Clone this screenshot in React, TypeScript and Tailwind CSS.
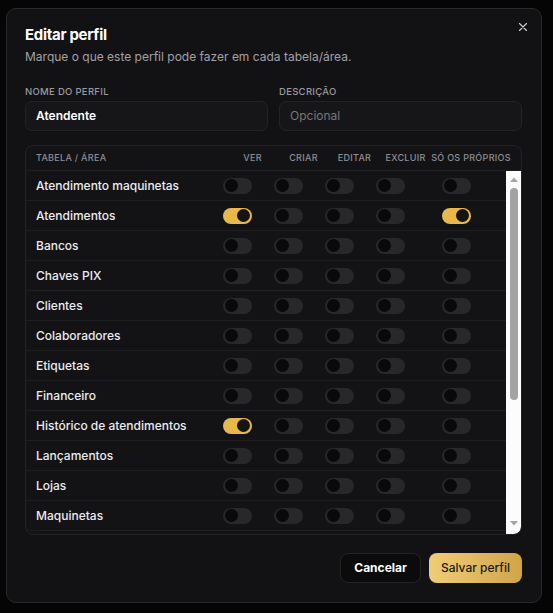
import { useState } from "react";

type Perm = "ver" | "criar" | "editar" | "excluir" | "proprios";

const COLS: { key: Perm; label: string }[] = [
  { key: "ver", label: "Ver" },
  { key: "criar", label: "Criar" },
  { key: "editar", label: "Editar" },
  { key: "excluir", label: "Excluir" },
  { key: "proprios", label: "Só os próprios" },
];

const TABELAS = [
  "Atendimento maquinetas",
  "Atendimentos",
  "Bancos",
  "Chaves PIX",
  "Clientes",
  "Colaboradores",
  "Etiquetas",
  "Financeiro",
  "Histórico de atendimentos",
  "Lançamentos",
  "Lojas",
  "Maquinetas",
];

const INICIAL: Record<string, Perm[]> = {
  Atendimentos: ["ver", "proprios"],
  "Histórico de atendimentos": ["ver"],
};

const grid = "grid grid-cols-[1fr_51px_51px_51px_51px_80px] items-center";

function Toggle({ on, onClick }: { on: boolean; onClick: () => void }) {
  return (
    <button
      onClick={onClick}
      className={`relative mx-auto flex h-[16px] w-[29px] items-center rounded-full px-[2px] ${
        on ? "justify-end bg-[#e8b84a]" : "justify-start bg-[#28282b]"
      }`}
    >
      <span className={`block h-[13px] w-[13px] rounded-full ${on ? "bg-[#141414]" : "bg-[#09090a]"}`} />
    </button>
  );
}

function Scrollbar() {
  return (
    <div className="flex w-[15px] flex-col items-center rounded-br-[7px] bg-[#fcfcfc] pb-[3px]">
      <svg width="10" height="14" viewBox="0 0 10 14" className="mt-[1px]">
        <path d="M1 10 5 5.5 9 10Z" fill="#a3a3a3" />
      </svg>
      <div className="mt-[2px] h-[212px] w-[8px] rounded-full bg-[#a3a3a3]" />
      <div className="flex-1" />
      <svg width="10" height="14" viewBox="0 0 10 14">
        <path d="M1 4 5 8.5 9 4Z" fill="#a3a3a3" />
      </svg>
    </div>
  );
}

export default function App() {
  const [perms, setPerms] = useState<Record<string, Perm[]>>(INICIAL);

  const toggle = (t: string, p: Perm) => {
    setPerms((prev) => {
      const cur = prev[t] ?? [];
      return { ...prev, [t]: cur.includes(p) ? cur.filter((x) => x !== p) : [...cur, p] };
    });
  };

  return (
    <div
      className="h-[613px] w-full bg-[#050505] pl-[6px] pt-[8px]"
      style={{ fontFamily: "Inter, 'Noto Sans', sans-serif" }}
    >
      <div className="relative flex w-[536px] flex-col rounded-[10px] border border-[#2a2a2c] bg-[#121214] pb-[19px] pl-[18px] pr-[19px] pt-[14px]">
        <button className="absolute right-[11px] top-[11px] text-[#cfcfcf]">
          <svg width="14" height="14" viewBox="0 0 24 24" fill="none" stroke="currentColor" strokeWidth="2" strokeLinecap="round">
            <path d="M18 6 6 18M6 6l12 12" />
          </svg>
        </button>

        <h2 className="text-[15px] font-bold leading-[24px] tracking-[-0.3px] text-white">Editar perfil</h2>
        <p className="text-[12px] leading-[20px] text-[#a1a1a6]">
          Marque o que este perfil pode fazer em cada tabela/área.
        </p>

        <div className="mt-[18px] grid grid-cols-2 gap-[11px]">
          <div className="flex flex-col gap-[2px]">
            <label className="text-[9.5px] font-medium uppercase leading-[14px] tracking-[0.3px] text-[#9a9a9e]">
              Nome do perfil
            </label>
            <div className="flex h-[30px] items-center rounded-[7px] border border-[#232326] bg-[#161618] px-[10px] text-[12px] font-semibold text-white">
              Atendente
            </div>
          </div>
          <div className="flex flex-col gap-[2px]">
            <label className="text-[9.5px] font-medium uppercase leading-[14px] tracking-[0.3px] text-[#9a9a9e]">
              Descrição
            </label>
            <div className="flex h-[30px] items-center rounded-[7px] border border-[#232326] bg-[#161618] px-[10px] text-[12px] text-[#77777c]">
              Opcional
            </div>
          </div>
        </div>

        <div className="mt-[14px] flex flex-col overflow-hidden rounded-[8px] border border-[#232326] bg-[#131315]">
          <div
            className={`${grid} h-[25px] border-b border-[#1e1e21] px-[10px] text-[9px] font-medium uppercase tracking-[0.3px] text-[#8e8e93]`}
          >
            <span>Tabela / Área</span>
            {COLS.map((c) => (
              <span key={c.key} className="whitespace-nowrap text-center">
                {c.label}
              </span>
            ))}
          </div>
          <div className="flex h-[363px]">
            <div className="flex-1 overflow-hidden">
              {TABELAS.map((t) => (
                <div key={t} className={`${grid} h-[30px] border-b border-[#1e1e21] px-[10px]`}>
                  <span className="text-[12px] font-medium text-[#ececef]">{t}</span>
                  {COLS.map((c) => (
                    <Toggle key={c.key} on={(perms[t] ?? []).includes(c.key)} onClick={() => toggle(t, c.key)} />
                  ))}
                </div>
              ))}
            </div>
            <Scrollbar />
          </div>
        </div>

        <div className="mt-[18px] flex justify-end gap-[8px]">
          <button className="h-[30px] rounded-[8px] border border-[#232326] bg-[#0b0b0c] px-[13px] text-[12px] font-bold text-white">
            Cancelar
          </button>
          <button className="h-[30px] rounded-[8px] bg-gradient-to-r from-[#f0cd76] to-[#d0a548] px-[12px] text-[12px] font-medium text-[#1c1a15]">
            Salvar perfil
          </button>
        </div>
      </div>
    </div>
  );
}
